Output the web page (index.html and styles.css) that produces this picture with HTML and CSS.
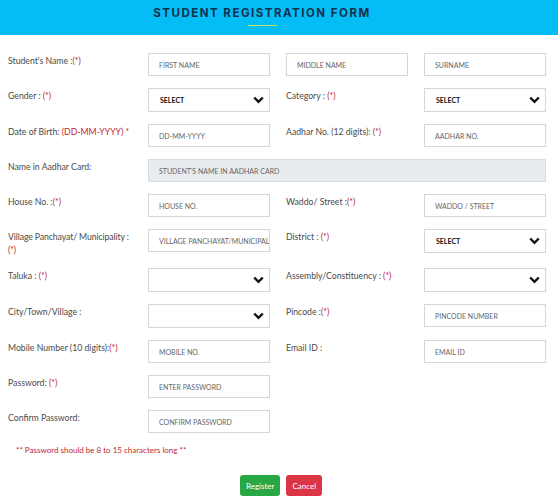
FILE: index.html
```html
<!DOCTYPE html>
<html lang="en">
<head>
    <meta charset="UTF-8">
    <meta name="viewport" content="width=device-width, initial-scale=1.0">
    <title>Student Registration Form</title>
    <link rel="stylesheet" href="styles.css">
</head>

<body>
    <header class="banner">
        <h1>STUDENT REGISTRATION FORM</h1>
        <span class="linea"></span>
    </header>

    <form action="" class="registro">
        <div class="campos">
            <label>Student's Name :<span class="req">(*)</span></label>
            <input type="text" placeholder="FIRST NAME">
            <input type="text" placeholder="MIDDLE NAME">
            <input type="text" placeholder="SURNAME">

            <label>Gender : <span class="req">(*)</span></label>
            <select><option>SELECT</option></select>
            <label>Category : <span class="req">(*)</span></label>
            <select><option>SELECT</option></select>

            <label>Date of Birth: <span class="req">(DD-MM-YYYY) *</span></label>
            <input type="text" placeholder="DD-MM-YYYY">
            <label>Aadhar No. (12 digits): <span class="req">(*)</span></label>
            <input type="text" placeholder="AADHAR NO.">

            <label>Name in Aadhar Card:</label>
            <input type="text" class="ancho" placeholder="STUDENT'S NAME IN AADHAR CARD" readonly>

            <label>House No. :<span class="req">(*)</span></label>
            <input type="text" placeholder="HOUSE NO.">
            <label>Waddo/ Street :<span class="req">(*)</span></label>
            <input type="text" placeholder="WADDO / STREET">

            <label class="largo">Village Panchayat/ Municipality :<br><span class="req">(*)</span></label>
            <input type="text" placeholder="VILLAGE PANCHAYAT/MUNICIPALITY">
            <label>District : <span class="req">(*)</span></label>
            <select><option>SELECT</option></select>

            <label>Taluka : <span class="req">(*)</span></label>
            <select><option></option></select>
            <label>Assembly/Constituency : <span class="req">(*)</span></label>
            <select><option></option></select>

            <label>City/Town/Village :</label>
            <select><option></option></select>
            <label>Pincode :<span class="req">(*)</span></label>
            <input type="text" placeholder="PINCODE NUMBER">

            <label>Mobile Number (10 digits):<span class="req">(*)</span></label>
            <input type="text" placeholder="MOBILE NO.">
            <label>Email ID :</label>
            <input type="text" placeholder="EMAIL ID">

            <label class="nueva">Password: <span class="req">(*)</span></label>
            <input type="password" placeholder="ENTER PASSWORD">

            <label class="nueva">Confirm Password:</label>
            <input type="password" placeholder="CONFIRM PASSWORD">
        </div>

        <p class="nota">** Password should be 8 to 15 characters long **</p>

        <div class="botones">
            <button type="submit" class="btn registrar">Register</button>
            <button type="button" class="btn cancelar">Cancel</button>
        </div>
    </form>
</body>
</html>
```

FILE: styles.css
```css
body {
    font-family: Lato, "Open Sans", sans-serif;
    background-color: #fff;
    color: #444;
    margin: 0;
    padding: 0;
}

.banner {
    background-color: #05bdf5;
    height: 35px;
    padding-right: 34px;
    display: flex;
    flex-direction: column;
    align-items: center;
}

.banner h1 {
    margin: 6px 0 0;
    font-family: Inter, "Open Sans", sans-serif;
    font-size: 11.5px;
    font-weight: 700;
    letter-spacing: 1.5px;
    color: #12304d;
}

.linea {
    display: block;
    width: 29px;
    height: 1px;
    margin-top: 5px;
    background-color: #c8dd6a;
}

.registro {
    padding: 18px 0 0 8px;
}

.campos {
    display: grid;
    grid-template-columns: 124px 122px 122px 122px;
    column-gap: 16px;
    row-gap: 12px;
    align-items: start;
}

.campos label {
    font-size: 8.7px;
    line-height: 13px;
    padding-top: 1px;
    color: #4a4a4a;
}

.campos .largo {
    white-space: nowrap;
    letter-spacing: -0.1px;
}

.campos .nueva {
    grid-column: 1;
}

.req {
    color: #c0262d;
}

.campos input,
.campos select {
    box-sizing: border-box;
    height: 23px;
    width: 100%;
    border: 1px solid #d6d6d6;
    border-radius: 0;
    background-color: #fff;
    padding: 0 0 0 10px;
    margin: 0;
    font-family: Lato, sans-serif;
    font-size: 7px;
    color: #333;
    outline: none;
}

.campos input::placeholder {
    color: #666;
}

.campos select {
    -webkit-appearance: none;
    appearance: none;
    height: 24px;
    padding-left: 11px;
    font-weight: 700;
    color: #111;
    background-image: url("data:image/svg+xml,%3Csvg xmlns='http://www.w3.org/2000/svg' width='11' height='8' viewBox='0 0 11 8'%3E%3Cpath d='M1.2 1.5 L5.5 5.8 L9.8 1.5' fill='none' stroke='%23111' stroke-width='2.4'/%3E%3C/svg%3E");
    background-repeat: no-repeat;
    background-position: right 5px center;
}

.campos input.ancho {
    grid-column: 2 / 5;
    background-color: #e9ecef;
    border-color: #dadde0;
}

.nota {
    margin: 12px 0 0 8px;
    font-size: 8px;
    color: #c0262d;
}

.botones {
    display: flex;
    justify-content: center;
    gap: 6px;
    margin-top: 20px;
    padding-right: 4px;
}

.btn {
    font-family: Lato, sans-serif;
    font-size: 8px;
    color: #fff;
    border: none;
    border-radius: 3px;
    height: 21px;
    padding: 0 6px;
    cursor: pointer;
}

.registrar {
    background-color: #28a745;
}

.cancelar {
    background-color: #dc3545;
}
```
